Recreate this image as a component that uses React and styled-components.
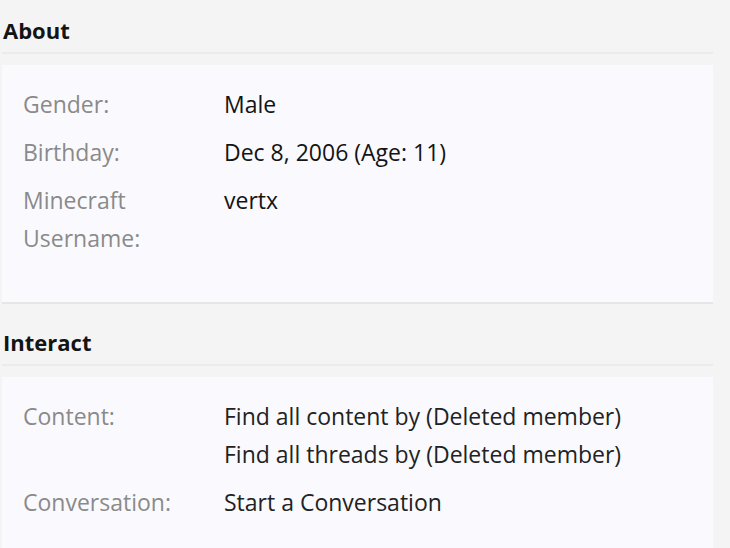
import React from "react";
import styled, { createGlobalStyle } from "styled-components";

const Global = createGlobalStyle`
  html, body { margin: 0; padding: 0; background: #f4f4f4; }
  body { font-family: "Open Sans", Lato, sans-serif; }
`;

const Page = styled.div`
  width: 711px;
  padding-left: 2px;
  display: flex;
  flex-direction: column;
`;

const Section = styled.section`
  display: flex;
  flex-direction: column;
  margin-bottom: ${(p) => p.$gap || 0}px;
`;

const Heading = styled.h3`
  margin: 0 0 11px;
  padding: 17px 0 9px 1px;
  font-size: 22px;
  line-height: 26px;
  font-weight: 700;
  color: #141414;
  border-bottom: 2px solid #ebebeb;
`;

const Card = styled.dl`
  margin: 0;
  background: #fafafe;
  border-bottom: 2px solid #e6e6e6;
  padding: 20px 21px ${(p) => p.$pb}px;
  display: grid;
  grid-template-columns: 201px 1fr;
  row-gap: 10px;
  font-size: 23px;
  line-height: 38px;
`;

const Label = styled.dt`
  color: #8a8a8a;
  margin: 0;
`;

const Value = styled.dd`
  color: #141414;
  margin: 0;
  display: flex;
  flex-direction: column;
`;

const Link = styled.span`
  color: #222;
`;

export default function App() {
  return (
    <>
      <Global />
      <Page>
        <Section $gap={8}>
          <Heading>About</Heading>
          <Card $pb={45}>
            <Label>Gender:</Label>
            <Value>Male</Value>
            <Label>Birthday:</Label>
            <Value>Dec 8, 2006 (Age: 11)</Value>
            <Label>
              Minecraft
              <br />
              Username:
            </Label>
            <Value>vertx</Value>
          </Card>
        </Section>
        <Section>
          <Heading>Interact</Heading>
          <Card $pb={40}>
            <Label>Content:</Label>
            <Value>
              <Link>Find all content by (Deleted member)</Link>
              <Link>Find all threads by (Deleted member)</Link>
            </Value>
            <Label>Conversation:</Label>
            <Value>
              <Link>Start a Conversation</Link>
            </Value>
          </Card>
        </Section>
      </Page>
    </>
  );
}
